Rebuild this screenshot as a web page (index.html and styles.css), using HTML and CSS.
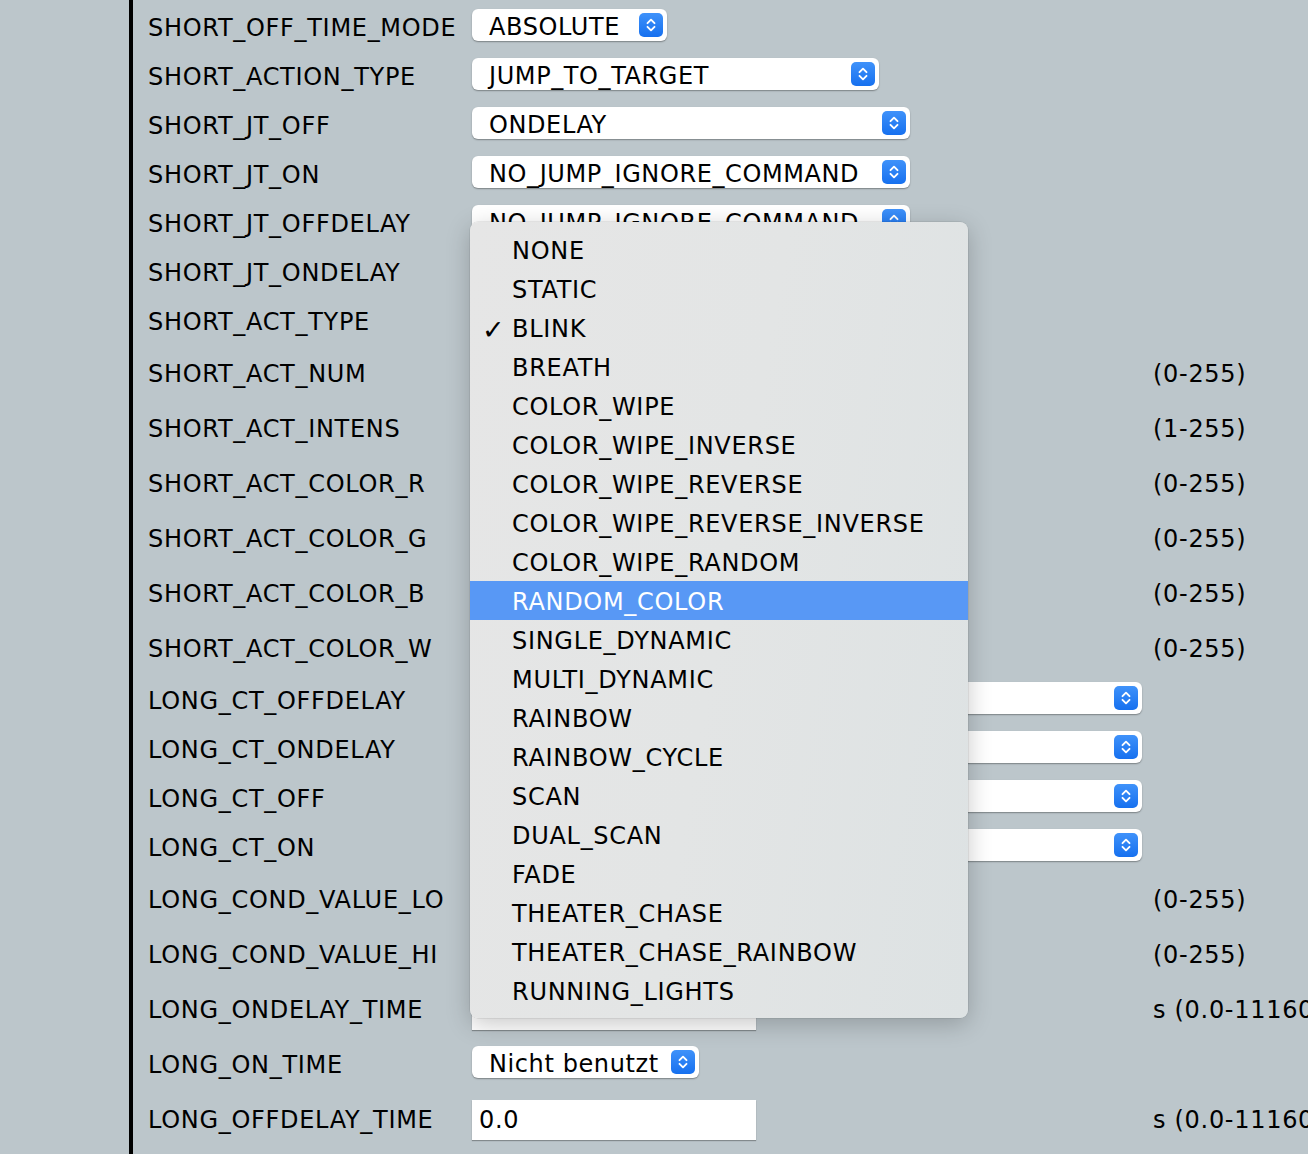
FILE: index.html
```html
<!DOCTYPE html>
<html>
<head>
<meta charset="utf-8">
<link rel="stylesheet" href="styles.css">
</head>
<body>
<div class="panel">
  <div class="row sel"><div class="lbl">SHORT_OFF_TIME_MODE</div><div class="ctl"><div class="select w195"><span>ABSOLUTE</span><i class="btn"><svg viewBox="0 0 24 24"><path d="M8.5 10.2 12 6.7 15.5 10.2M8.5 13.8 12 17.3 15.5 13.8"/></svg></i></div></div><div class="unit"></div></div>
  <div class="row sel"><div class="lbl">SHORT_ACTION_TYPE</div><div class="ctl"><div class="select w407"><span>JUMP_TO_TARGET</span><i class="btn"><svg viewBox="0 0 24 24"><path d="M8.5 10.2 12 6.7 15.5 10.2M8.5 13.8 12 17.3 15.5 13.8"/></svg></i></div></div><div class="unit"></div></div>
  <div class="row sel"><div class="lbl">SHORT_JT_OFF</div><div class="ctl"><div class="select w438"><span>ONDELAY</span><i class="btn"><svg viewBox="0 0 24 24"><path d="M8.5 10.2 12 6.7 15.5 10.2M8.5 13.8 12 17.3 15.5 13.8"/></svg></i></div></div><div class="unit"></div></div>
  <div class="row sel"><div class="lbl">SHORT_JT_ON</div><div class="ctl"><div class="select w438"><span>NO_JUMP_IGNORE_COMMAND</span><i class="btn"><svg viewBox="0 0 24 24"><path d="M8.5 10.2 12 6.7 15.5 10.2M8.5 13.8 12 17.3 15.5 13.8"/></svg></i></div></div><div class="unit"></div></div>
  <div class="row sel"><div class="lbl">SHORT_JT_OFFDELAY</div><div class="ctl"><div class="select w438"><span>NO_JUMP_IGNORE_COMMAND</span><i class="btn"><svg viewBox="0 0 24 24"><path d="M8.5 10.2 12 6.7 15.5 10.2M8.5 13.8 12 17.3 15.5 13.8"/></svg></i></div></div><div class="unit"></div></div>
  <div class="row sel"><div class="lbl">SHORT_JT_ONDELAY</div><div class="ctl"><div class="select w438"><span>NO_JUMP_IGNORE_COMMAND</span><i class="btn"><svg viewBox="0 0 24 24"><path d="M8.5 10.2 12 6.7 15.5 10.2M8.5 13.8 12 17.3 15.5 13.8"/></svg></i></div></div><div class="unit"></div></div>
  <div class="row sel"><div class="lbl">SHORT_ACT_TYPE</div><div class="ctl"><div class="select w438"><span>BLINK</span><i class="btn"><svg viewBox="0 0 24 24"><path d="M8.5 10.2 12 6.7 15.5 10.2M8.5 13.8 12 17.3 15.5 13.8"/></svg></i></div></div><div class="unit"></div></div>
  <div class="row inp"><div class="lbl">SHORT_ACT_NUM</div><div class="ctl"><div class="input">0</div></div><div class="unit">(0-255)</div></div>
  <div class="row inp"><div class="lbl">SHORT_ACT_INTENS</div><div class="ctl"><div class="input">255</div></div><div class="unit">(1-255)</div></div>
  <div class="row inp"><div class="lbl">SHORT_ACT_COLOR_R</div><div class="ctl"><div class="input">0</div></div><div class="unit">(0-255)</div></div>
  <div class="row inp"><div class="lbl">SHORT_ACT_COLOR_G</div><div class="ctl"><div class="input">0</div></div><div class="unit">(0-255)</div></div>
  <div class="row inp"><div class="lbl">SHORT_ACT_COLOR_B</div><div class="ctl"><div class="input">0</div></div><div class="unit">(0-255)</div></div>
  <div class="row inp"><div class="lbl">SHORT_ACT_COLOR_W</div><div class="ctl"><div class="input">0</div></div><div class="unit">(0-255)</div></div>
  <div class="row sel"><div class="lbl">LONG_CT_OFFDELAY</div><div class="ctl"><div class="select w670"><span>X GE COND_VALUE_LO</span><i class="btn"><svg viewBox="0 0 24 24"><path d="M8.5 10.2 12 6.7 15.5 10.2M8.5 13.8 12 17.3 15.5 13.8"/></svg></i></div></div><div class="unit"></div></div>
  <div class="row sel"><div class="lbl">LONG_CT_ONDELAY</div><div class="ctl"><div class="select w670"><span>X GE COND_VALUE_LO</span><i class="btn"><svg viewBox="0 0 24 24"><path d="M8.5 10.2 12 6.7 15.5 10.2M8.5 13.8 12 17.3 15.5 13.8"/></svg></i></div></div><div class="unit"></div></div>
  <div class="row sel"><div class="lbl">LONG_CT_OFF</div><div class="ctl"><div class="select w670"><span>X GE COND_VALUE_LO</span><i class="btn"><svg viewBox="0 0 24 24"><path d="M8.5 10.2 12 6.7 15.5 10.2M8.5 13.8 12 17.3 15.5 13.8"/></svg></i></div></div><div class="unit"></div></div>
  <div class="row sel"><div class="lbl">LONG_CT_ON</div><div class="ctl"><div class="select w670"><span>X GE COND_VALUE_LO</span><i class="btn"><svg viewBox="0 0 24 24"><path d="M8.5 10.2 12 6.7 15.5 10.2M8.5 13.8 12 17.3 15.5 13.8"/></svg></i></div></div><div class="unit"></div></div>
  <div class="row inp"><div class="lbl">LONG_COND_VALUE_LO</div><div class="ctl"><div class="input">50</div></div><div class="unit">(0-255)</div></div>
  <div class="row inp"><div class="lbl">LONG_COND_VALUE_HI</div><div class="ctl"><div class="input">180</div></div><div class="unit">(0-255)</div></div>
  <div class="row inp"><div class="lbl">LONG_ONDELAY_TIME</div><div class="ctl"><div class="input">0.0</div></div><div class="unit">s (0.0-111600.0)</div></div>
  <div class="row inp"><div class="lbl">LONG_ON_TIME</div><div class="ctl"><div class="select w227"><span>Nicht benutzt</span><i class="btn"><svg viewBox="0 0 24 24"><path d="M8.5 10.2 12 6.7 15.5 10.2M8.5 13.8 12 17.3 15.5 13.8"/></svg></i></div></div><div class="unit"></div></div>
  <div class="row inp"><div class="lbl">LONG_OFFDELAY_TIME</div><div class="ctl"><div class="input">0.0</div></div><div class="unit">s (0.0-111600.0)</div></div>
</div>

<div class="menu">
  <div class="item">NONE</div>
  <div class="item">STATIC</div>
  <div class="item checked"><span class="chk">✓</span>BLINK</div>
  <div class="item">BREATH</div>
  <div class="item">COLOR_WIPE</div>
  <div class="item">COLOR_WIPE_INVERSE</div>
  <div class="item">COLOR_WIPE_REVERSE</div>
  <div class="item">COLOR_WIPE_REVERSE_INVERSE</div>
  <div class="item">COLOR_WIPE_RANDOM</div>
  <div class="item active">RANDOM_COLOR</div>
  <div class="item">SINGLE_DYNAMIC</div>
  <div class="item">MULTI_DYNAMIC</div>
  <div class="item">RAINBOW</div>
  <div class="item">RAINBOW_CYCLE</div>
  <div class="item">SCAN</div>
  <div class="item">DUAL_SCAN</div>
  <div class="item">FADE</div>
  <div class="item">THEATER_CHASE</div>
  <div class="item">THEATER_CHASE_RAINBOW</div>
  <div class="item">RUNNING_LIGHTS</div>
</div>
</body>
</html>
```

FILE: styles.css
```css
html, body {
  margin: 0;
  padding: 0;
  background: #bcc6cb;
  overflow: hidden;
  height: 1154px;
}
body {
  position: relative;
  font-family: "DejaVu Sans", Verdana, sans-serif;
  font-size: 24px;
  letter-spacing: 0.7px;
  color: #000;
}
.panel {
  margin-left: 129px;
  border-left: 4px solid #000;
  padding-left: 15px;
  padding-top: 3px;
  min-height: 1200px;
}
.row {
  display: grid;
  grid-template-columns: 324px 681px auto;
  align-items: center;
  white-space: nowrap;
}
.row.sel { height: 49px; }
.row.inp { height: 55px; }
.lbl { line-height: 1; }
.unit { line-height: 1; }
.select {
  box-sizing: border-box;
  height: 32px;
  margin-bottom: 6px;
  background: #fff;
  border-radius: 6px;
  box-shadow: 0 1px 1.5px rgba(0,0,0,0.35);
  display: flex;
  align-items: center;
  justify-content: space-between;
  padding: 0 4px 0 17px;
  letter-spacing: 0.6px;
}
.select span {
  line-height: 1;
  position: relative;
  top: 2px;
}
.w195 { width: 195px; }
.w227 { width: 227px; }
.w407 { width: 407px; }
.w438 { width: 438px; }
.w670 { width: 670px; }
.btn {
  width: 24px;
  height: 24px;
  border-radius: 5px;
  background: linear-gradient(#3f92fa, #1670ef);
  display: block;
  flex: none;
}
.btn svg {
  width: 24px;
  height: 24px;
  display: block;
}
.btn path {
  fill: none;
  stroke: #fff;
  stroke-width: 1.9;
  stroke-linecap: round;
  stroke-linejoin: round;
}
.input {
  box-sizing: border-box;
  width: 284px;
  height: 40px;
  background: #fff;
  box-shadow: 0 1px 1px rgba(0,0,0,0.3);
  padding-left: 7px;
  display: flex;
  align-items: center;
  line-height: 1;
}
.menu {
  position: absolute;
  left: 470px;
  top: 222px;
  width: 498px;
  box-sizing: border-box;
  padding: 8px 0;
  border-radius: 8px;
  background: linear-gradient(100deg, #e6e6e6 0%, #e3e5e5 50%, #dde2e3 100%);
  box-shadow: 0 0 0 0.5px rgba(0,0,0,0.12), 0 6px 24px rgba(0,0,0,0.22);
}
.item {
  position: relative;
  height: 39px;
  line-height: 43px;
  padding-left: 42px;
  white-space: nowrap;
  overflow: hidden;
}
.item.active {
  background: #5898f5;
  color: #fff;
}
.chk {
  position: absolute;
  left: 12px;
  top: 0;
  font-weight: bold;
  font-size: 27px;
  letter-spacing: 0;
}
```
